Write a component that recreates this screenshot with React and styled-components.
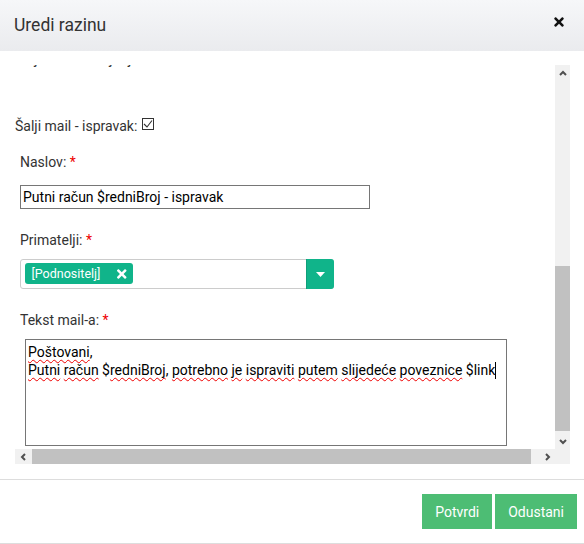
import React, { useLayoutEffect, useRef, useState } from "react";
import styled, { createGlobalStyle } from "styled-components";
import { FaTimes } from "react-icons/fa";

const Global = createGlobalStyle`
  html, body { margin: 0; padding: 0; background: #fff; }
  body { font-family: Roboto, "Liberation Sans", sans-serif; font-size: 14px; color: #333; }
  * { box-sizing: border-box; }
`;

const Dialog = styled.div`
  width: 584px;
  height: 544px;
  display: flex;
  flex-direction: column;
  background: #fff;
`;

const Header = styled.header`
  height: 51px;
  flex: none;
  display: flex;
  align-items: center;
  justify-content: space-between;
  padding: 0 18px 1px 14px;
  background: linear-gradient(#f6f7f9, #eaebee);
`;

const Title = styled.h4`
  margin: 0;
  font-size: 17.5px;
  font-weight: 400;
  line-height: 20px;
  color: #333;
`;

const CloseButton = styled.button`
  border: none;
  background: none;
  padding: 0;
  margin-bottom: 6px;
  display: flex;
  color: #111;
  cursor: pointer;
`;

const Body = styled.div`
  flex: 1;
  min-height: 0;
  display: grid;
  grid-template-columns: 540px 15px;
  grid-template-rows: 384px 15px;
  padding: 14px 14px 15px 15px;
`;

const Viewport = styled.div`
  overflow: hidden;
`;

const Content = styled.div`
  width: 552px;
  padding: 0 0 10px 2px;
`;

const FieldGroup = styled.div`
  padding-left: 5px;
  margin-bottom: ${(p) => (p.$last ? 0 : 21)}px;
`;

const Label = styled.label`
  display: block;
  line-height: 20px;
  margin-bottom: ${(p) => p.$gap ?? 9}px;
  color: #333;
`;

const Req = styled.span`
  color: #e00;
`;

const TextInput = styled.input`
  display: block;
  width: 350px;
  height: 24px;
  margin: 0;
  border: 1px solid #767676;
  border-radius: 0;
  padding: 0 2px;
  font: 14px Roboto, "Liberation Sans", sans-serif;
  color: #000;
  outline: none;
`;

const PlainArea = styled.textarea`
  display: block;
  width: 482px;
  height: ${(p) => p.$height}px;
  margin-left: 5px;
  border: 1px solid #767676;
  padding: 3px 2px;
  font: 14px Roboto, "Liberation Sans", sans-serif;
  resize: none;
`;

const Select = styled.div`
  display: flex;
  width: 314px;
  height: 30px;
  border: 1px solid #ccc;
  border-radius: 3px;
`;

const TagArea = styled.div`
  flex: 1;
  display: flex;
  align-items: flex-start;
  gap: 4px;
  padding: 3px 4px;
`;

const Tag = styled.span`
  display: inline-flex;
  align-items: center;
  height: 21px;
  padding: 0 6px 0 6.5px;
  gap: 17px;
  background: #10b48a;
  color: #fff;
  border-radius: 3px;
  font-size: 12.5px;
`;

const TagRemove = styled.span`
  display: flex;
  color: #fff;
`;

const DropButton = styled.span`
  flex: none;
  width: 28px;
  margin: -1px -1px -1px 0;
  display: flex;
  align-items: center;
  justify-content: center;
  background: #10b48a;
  border-radius: 0 3px 3px 0;
  border-left: 1px solid #0e9f7a;
`;

const CheckRow = styled.div`
  display: flex;
  align-items: flex-start;
  line-height: 20px;
  color: #333;
  margin-bottom: ${(p) => (p.$open ? 16 : 47)}px;
`;

const CheckBox = styled.span`
  width: 12px;
  height: 12px;
  margin: 2px 0 0 5px;
  border: 1px solid #333;
  background: #fff;
  display: flex;
  align-items: center;
  justify-content: center;
`;

const MailBody = styled.div`
  width: 482px;
  height: 107px;
  margin-left: 5px;
  border: 1px solid #767676;
  padding: 3px 2px;
  font-size: 14px;
  line-height: 18px;
  color: #000;
  white-space: pre;
  overflow: hidden;
  outline: none;
`;

const Misspelled = styled.span`
  text-decoration: underline wavy #e00;
  text-decoration-thickness: 1px;
  text-underline-offset: 2px;
  text-decoration-skip-ink: none;
`;

const Caret = styled.span`
  display: inline-block;
  width: 1px;
  height: 17px;
  background: #000;
  vertical-align: -4px;
`;

/* scrollbars */
const VBar = styled.div`
  display: flex;
  flex-direction: column;
  background: #f1f1f1;
`;

const HBar = styled.div`
  display: flex;
  background: #f1f1f1;
`;

const Corner = styled.div`
  background: #f1f1f1;
`;

const ScrollButton = styled.span`
  flex: none;
  width: 15px;
  height: 15px;
  display: flex;
  align-items: center;
  justify-content: center;
`;

const VTrack = styled.div`
  flex: 1;
  display: flex;
  flex-direction: column;
`;

const HTrack = styled.div`
  flex: 1;
  display: flex;
`;

const Thumb = styled.div`
  flex: none;
  background: #c1c1c1;
`;

const Footer = styled.footer`
  flex: none;
  display: flex;
  justify-content: flex-end;
  gap: 3px;
  padding: 14px 7px;
  border-top: 1px solid #ddd;
  border-bottom: 1px solid #ddd;
`;

const Button = styled.button`
  height: 35px;
  padding: 0 13px;
  border: none;
  border-radius: 0;
  background: #4dbd74;
  color: #fff;
  font: 14px Roboto, "Liberation Sans", sans-serif;
  cursor: pointer;
`;

function Arrow({ dir }) {
  const rot = { up: 0, down: 180, left: -90, right: 90 }[dir];
  return (
    <svg width="8" height="8" viewBox="0 0 8 8" style={{ transform: `rotate(${rot}deg)` }}>
      <polyline points="1,6 4,3 7,6" fill="none" stroke="#505050" strokeWidth="2" />
    </svg>
  );
}

function Check({ checked }) {
  return (
    <CheckBox>
      {checked && (
        <svg width="10" height="10" viewBox="0 0 10 10">
          <polyline points="1,5 4,8 9,1.5" fill="none" stroke="#333" strokeWidth="1.1" />
        </svg>
      )}
    </CheckBox>
  );
}

function Caretdown() {
  return (
    <svg width="9" height="5" viewBox="0 0 9 5">
      <polygon points="0,0 9,0 4.5,5" fill="#fff" />
    </svg>
  );
}

function Recipients({ value }) {
  return (
    <Select>
      <TagArea>
        {value && (
          <Tag>
            {value}
            <TagRemove>
              <FaTimes style={{ width: 9.5, height: 14 }} />
            </TagRemove>
          </Tag>
        )}
      </TagArea>
      <DropButton>
        <Caretdown />
      </DropButton>
    </Select>
  );
}

const W = Misspelled;

export default function App() {
  const ref = useRef(null);
  const [m, setM] = useState({ vTop: 0, vLen: 0, hLeft: 0, hLen: 0 });

  useLayoutEffect(() => {
    const el = ref.current;
    if (!el) return;
    el.scrollTop = el.scrollHeight - el.clientHeight - 7;
    el.scrollLeft = 2;
    const vTrack = el.clientHeight - 30;
    const hTrack = el.clientWidth - 30;
    setM({
      vTop: (el.scrollTop / el.scrollHeight) * vTrack,
      vLen: (el.clientHeight / el.scrollHeight) * vTrack,
      hLeft: (el.scrollLeft / el.scrollWidth) * hTrack,
      hLen: (el.clientWidth / el.scrollWidth) * hTrack,
    });
  }, []);

  return (
    <>
      <Global />
      <Dialog>
        <Header>
          <Title>Uredi razinu</Title>
          <CloseButton aria-label="Zatvori">
            <FaTimes size={14} />
          </CloseButton>
        </Header>
        <Body>
          <Viewport ref={ref}>
            <Content>
              <FieldGroup>
                <Label $gap={13}>Naziv: <Req>*</Req></Label>
                <TextInput defaultValue="Voditelj odjela" />
              </FieldGroup>
              <FieldGroup>
                <Label>Opis:</Label>
                <PlainArea $height={62} defaultValue="" />
              </FieldGroup>
              <FieldGroup>
                <Label $gap={13}>Redoslijed: <Req>*</Req></Label>
                <TextInput defaultValue="2" />
              </FieldGroup>
              <FieldGroup>
                <Label>Odobravatelji: <Req>*</Req></Label>
                <Recipients value="[Voditelj]" />
              </FieldGroup>
              <CheckRow>
                Šalji mail - odobreno:<Check />
              </CheckRow>
              <CheckRow>
                Šalji mail - odbijanje:<Check />
              </CheckRow>
              <CheckRow $open>
                Šalji mail - ispravak:<Check checked />
              </CheckRow>
              <FieldGroup>
                <Label $gap={13}>Naslov: <Req>*</Req></Label>
                <TextInput defaultValue="Putni račun $redniBroj - ispravak" />
              </FieldGroup>
              <FieldGroup>
                <Label>Primatelji: <Req>*</Req></Label>
                <Recipients value="[Podnositelj]" />
              </FieldGroup>
              <FieldGroup $last>
                <Label>Tekst mail-a: <Req>*</Req></Label>
                <MailBody contentEditable suppressContentEditableWarning spellCheck={false}>
                  <W>Poštovani</W>,{"\n"}
                  <W>Putni</W> <W>račun</W> $<W>redniBroj</W>, <W>potrebno</W> <W>je</W>{" "}
                  <W>ispraviti</W> <W>putem</W> <W>slijedeće</W> <W>poveznice</W> $link
                  <Caret />
                </MailBody>
              </FieldGroup>
            </Content>
          </Viewport>
          <VBar>
            <ScrollButton><Arrow dir="up" /></ScrollButton>
            <VTrack>
              <Thumb style={{ marginTop: m.vTop, height: m.vLen }} />
            </VTrack>
            <ScrollButton><Arrow dir="down" /></ScrollButton>
          </VBar>
          <HBar>
            <ScrollButton><Arrow dir="left" /></ScrollButton>
            <HTrack>
              <Thumb style={{ marginLeft: m.hLeft, width: m.hLen }} />
            </HTrack>
            <ScrollButton><Arrow dir="right" /></ScrollButton>
          </HBar>
          <Corner />
        </Body>
        <Footer>
          <Button>Potvrdi</Button>
          <Button>Odustani</Button>
        </Footer>
      </Dialog>
    </>
  );
}
